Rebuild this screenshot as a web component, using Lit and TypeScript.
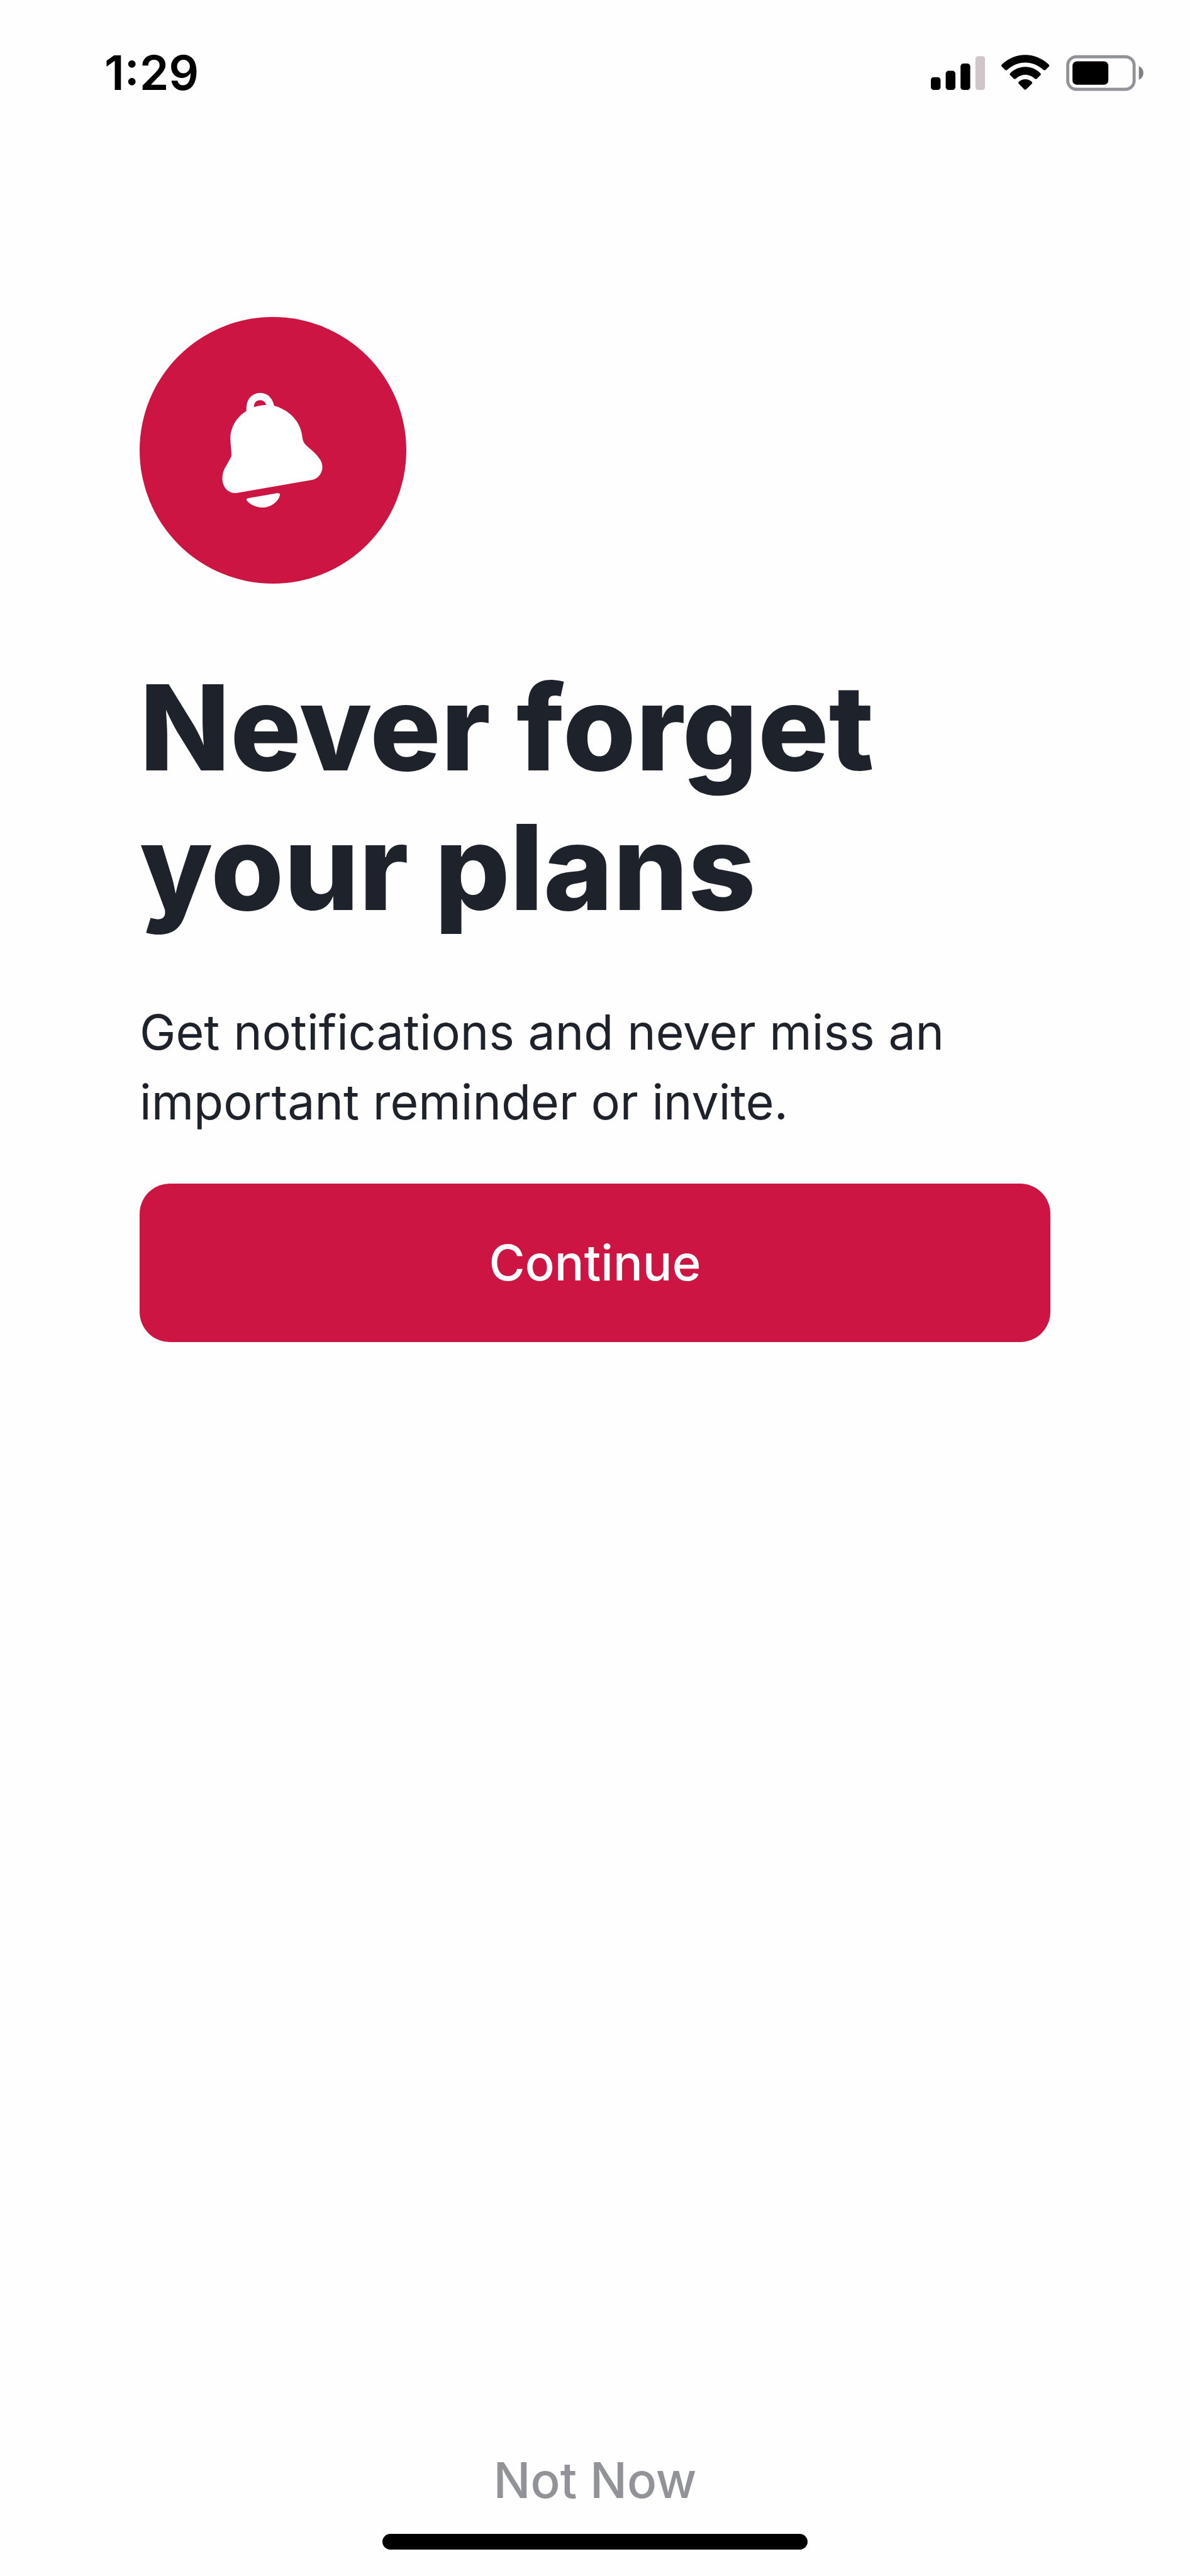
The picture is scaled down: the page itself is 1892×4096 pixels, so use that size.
import { LitElement, html, css, svg } from "lit";
import { customElement } from "lit/decorators.js";

const SIGNAL_BARS = [
  { x: 69, y: 163, on: true },
  { x: 141, y: 132, on: true },
  { x: 213, y: 97, on: true },
  { x: 285, y: 61, on: false },
];

@customElement("status-bar")
export class StatusBar extends LitElement {
  static styles = css`
    :host {
      display: flex;
      align-items: center;
      justify-content: space-between;
      padding: 72px 74px 0 166px;
      color: #000;
    }
    .time {
      font-size: 75px;
      line-height: 88px;
      font-weight: 600;
    }
    .icons {
      display: flex;
      align-items: center;
      gap: 26px;
    }
    .icons svg {
      display: block;
      height: 58px;
    }
    .on {
      fill: #000;
    }
    .off {
      fill: #d0c5c9;
    }
    .shell {
      fill: none;
      stroke: #929398;
      stroke-width: 15;
    }
    .nub {
      fill: #7e7f84;
    }
  `;

  render() {
    return html`
      <time class="time">1:29</time>
      <div class="icons">
        <svg viewBox="69 54 263 177" role="img" aria-label="Signal">
          ${SIGNAL_BARS.map(
            (b) => svg`<rect class=${b.on ? "on" : "off"} x=${b.x} y=${b.y}
              width="47" height=${225 - b.y} rx="14"></rect>`
          )}
        </svg>
        <svg viewBox="410 54 233 177" role="img" aria-label="Wi-Fi">
          <path class="on" d="M413 101C444 72 484 55 526 55C568 55 609 72 640 101Q646 107 640 112L625 127Q620 132 614 127C590 105 559 92 526 92C493 92 463 105 439 127Q434 132 428 127L413 112Q407 107 413 101Z"/>
          <path class="on" d="M454 143C474 124 499 113 526 113C554 113 579 124 599 143Q605 149 599 154L583 170Q578 175 572 170C559 158 543 151 526 151C510 151 494 158 481 170Q475 175 470 170L454 154Q448 149 454 143Z"/>
          <path class="on" d="M495 185C504 177 515 173 526 173C538 173 549 177 558 185Q563 190 558 195L531 222Q526 227 521 222L495 195Q490 190 495 185Z"/>
        </svg>
        <svg viewBox="721 54 376 177" role="img" aria-label="Battery">
          <rect class="shell" x="729" y="64" width="322" height="158" rx="42"></rect>
          <rect class="on" x="752" y="86" width="174" height="114" rx="22"></rect>
          <path class="nub" d="M1074 110C1088 116 1096 128 1096 143C1096 157 1088 169 1074 175Z"/>
        </svg>
      </div>
    `;
  }
}

@customElement("bell-badge")
export class BellBadge extends LitElement {
  static styles = css`
    :host {
      display: block;
      width: 424px;
    }
    svg {
      display: block;
      width: 100%;
    }
    .disc {
      fill: #cc1543;
    }
    .bell {
      fill: #fff;
    }
    .loop {
      fill: none;
      stroke: #fff;
      stroke-width: 35;
    }
  `;

  render() {
    return html`
      <svg viewBox="-314 -294 1290 1290" aria-hidden="true">
        <circle class="disc" cx="331" cy="351" r="645"></circle>
        <path class="loop" d="M222 170C219 158 219 146 222 130C227 106 246 91 270 91C296 91 317 112 320 146"/>
        <path class="bell" d="M205 159C224 145 252 134 300 131Q320 130 338 136C410 156 462 212 471 275C475 298 475 309 489 324C510 345 535 360 556 391C566 405 570 418 570 434C569 464 548 490 517 495L180 553C165 555 159 558 145 558C112 556 87 528 86 490C86 472 89 456 97 440C108 418 120 401 130 379C131 350 125 325 125 292C126 235 158 187 205 159Z"/>
        <path class="bell" d="M209 583L349 559Q366 557 365 566C357 601 320 628 278 628C249 628 220 614 204 594Q201 585 209 583Z"/>
      </svg>
    `;
  }
}

@customElement("app-root")
export class AppRoot extends LitElement {
  static styles = css`
    :host {
      display: flex;
      flex-direction: column;
      box-sizing: border-box;
      min-height: 100vh;
      background: #fefefe;
      color: #1e222a;
      font-family: Inter, "Liberation Sans", sans-serif;
    }
    .content {
      flex: 1;
      padding: 344px 222px 0;
    }
    .title {
      margin: 118px 0 96px;
      font-size: 188px;
      line-height: 222px;
      font-weight: 800;
    }
    .lead {
      margin: 0 0 74px;
      font-size: 77px;
      line-height: 111px;
    }
    button {
      display: block;
      border: 0;
      font: inherit;
      font-size: 78px;
      line-height: 111px;
      font-weight: 500;
      cursor: pointer;
    }
    .primary {
      width: 100%;
      padding: 70px 48px 71px;
      border-radius: 48px;
      background: #cc1543;
      color: #fff;
    }
    .footer {
      display: flex;
      flex-direction: column;
      align-items: center;
      gap: 30px;
      padding-bottom: 42px;
    }
    .secondary {
      padding: 0 48px;
      background: none;
      color: #929398;
    }
    .home {
      width: 676px;
      height: 25px;
      border-radius: 13px;
      background: #000;
    }
  `;

  render() {
    return html`
      <status-bar></status-bar>
      <main class="content">
        <bell-badge></bell-badge>
        <h1 class="title">Never forget your plans</h1>
        <p class="lead">
          Get notifications and never miss an important reminder or invite.
        </p>
        <button class="primary" type="button">Continue</button>
      </main>
      <footer class="footer">
        <button class="secondary" type="button">Not Now</button>
        <div class="home"></div>
      </footer>
    `;
  }
}
